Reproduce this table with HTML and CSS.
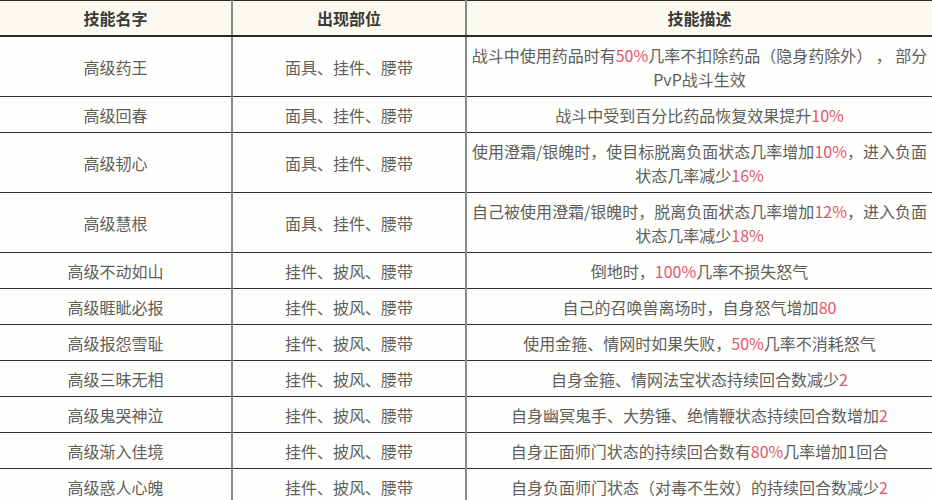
FILE: index.html
```html
<!DOCTYPE html>
<html lang="zh-CN">
<head>
<meta charset="utf-8">
<link rel="stylesheet" href="styles.css">
</head>
<body>
<table class="skills">
  <colgroup>
    <col class="c-name">
    <col class="c-part">
    <col class="c-desc">
  </colgroup>
  <thead>
    <tr><th>技能名字</th><th>出现部位</th><th>技能描述</th></tr>
  </thead>
  <tbody>
    <tr><td>高级药王</td><td>面具、挂件、腰带</td><td>战斗中使用药品时有<span class="hl">50%</span>几率不扣除药品（隐身药除外）&nbsp;，&nbsp;部分<br>PvP战斗生效</td></tr>
    <tr><td>高级回春</td><td>面具、挂件、腰带</td><td>战斗中受到百分比药品恢复效果提升<span class="hl">10%</span></td></tr>
    <tr><td>高级韧心</td><td>面具、挂件、腰带</td><td>使用澄霜/银魄时，使目标脱离负面状态几率增加<span class="hl">10%</span>，进入负面<br>状态几率减少<span class="hl">16%</span></td></tr>
    <tr><td>高级慧根</td><td>面具、挂件、腰带</td><td>自己被使用澄霜/银魄时，脱离负面状态几率增加<span class="hl">12%</span>，进入负面<br>状态几率减少<span class="hl">18%</span></td></tr>
    <tr><td>高级不动如山</td><td>挂件、披风、腰带</td><td>倒地时，<span class="hl">100%</span>几率不损失怒气</td></tr>
    <tr><td>高级睚眦必报</td><td>挂件、披风、腰带</td><td>自己的召唤兽离场时，自身怒气增加<span class="hl">80</span></td></tr>
    <tr><td>高级报怨雪耻</td><td>挂件、披风、腰带</td><td>使用金箍、情网时如果失败，<span class="hl">50%</span>几率不消耗怒气</td></tr>
    <tr><td>高级三昧无相</td><td>挂件、披风、腰带</td><td>自身金箍、情网法宝状态持续回合数减少<span class="hl">2</span></td></tr>
    <tr><td>高级鬼哭神泣</td><td>挂件、披风、腰带</td><td>自身幽冥鬼手、大势锤、绝情鞭状态持续回合数增加<span class="hl">2</span></td></tr>
    <tr><td>高级渐入佳境</td><td>挂件、披风、腰带</td><td>自身正面师门状态的持续回合数有<span class="hl">80%</span>几率增加1回合</td></tr>
    <tr><td>高级惑人心魄</td><td>挂件、披风、腰带</td><td>自身负面师门状态（对毒不生效）的持续回合数减少<span class="hl">2</span></td></tr>
  </tbody>
</table>
</body>
</html>
```

FILE: styles.css
```css
html, body {
  margin: 0;
  padding: 0;
  background: #fdfcf8;
}
body {
  font-family: "Noto Sans CJK SC", "Noto Sans", sans-serif;
  color: #5e5e5b;
  font-size: 16px;
}
.skills {
  width: 932px;
  border-collapse: collapse;
  table-layout: fixed;
  border-top: 1px solid #2a2a2a;
}
.c-name { width: 232px; }
.c-part { width: 234px; }
.c-desc { width: 466px; }
.skills th,
.skills td {
  text-align: center;
  vertical-align: middle;
  line-height: 24px;
  padding: 6px 2px 5px;
  border-bottom: 1px solid #2e2e2e;
  white-space: nowrap;
}
.skills th {
  font-weight: bold;
  color: #3a3a36;
  background: #fbf9f0;
  padding: 5px 2px 5px;
  border-bottom: 2px solid #2a2a2a;
}
.skills th:nth-child(1), .skills td:nth-child(1),
.skills th:nth-child(2), .skills td:nth-child(2) {
  border-right: 2px solid #7f8e8c;
}
.skills td {
  background: #fefefc;
}
.hl {
  color: #e4566d;
}
```
